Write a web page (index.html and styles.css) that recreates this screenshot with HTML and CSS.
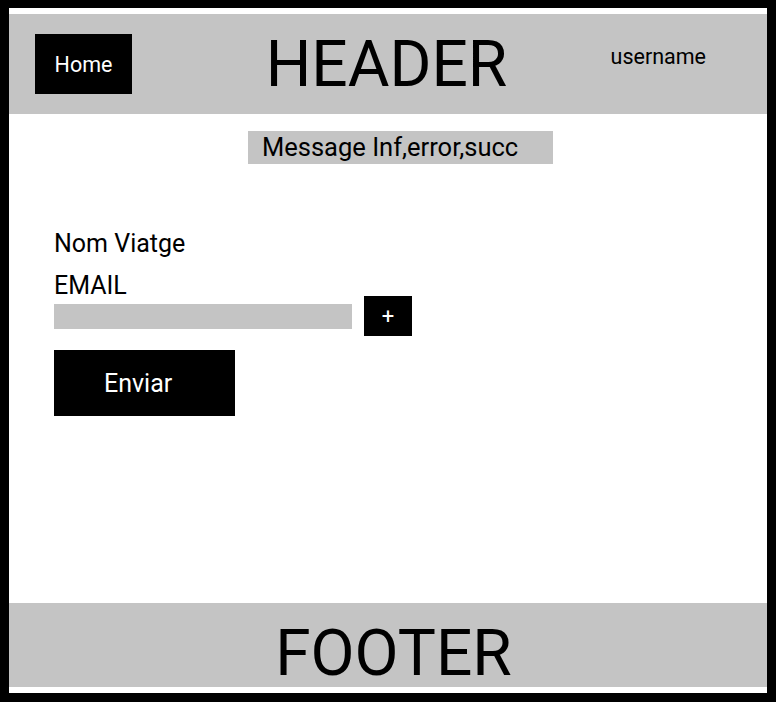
FILE: index.html
```html
<!DOCTYPE html>
<html>
<head>
	<title>Viatge</title>
	<link rel="stylesheet" href="styles.css">
</head>
<body>

	<div class="frame">
		<header class="top">
			<a class="home" href="#">Home</a>
			<h1>HEADER</h1>
			<span class="user">username</span>
		</header>

		<main class="main">
			<div class="message">Message Inf,error,succ</div>

			<form class="form">
				<label class="label">Nom Viatge</label>
				<label class="label label-email">EMAIL</label>
				<div class="row">
					<input type="text" class="input">
					<button type="button" class="add">+</button>
				</div>
				<button type="submit" class="send">Enviar</button>
			</form>
		</main>

		<footer class="bottom">FOOTER</footer>
	</div>

</body>
</html>
```

FILE: styles.css
```css
*{
	box-sizing: border-box;
}
body{
	margin: 0;
	font-family: Roboto, "Liberation Sans", sans-serif;
	color: #000;
}
.frame{
	display: flex;
	flex-direction: column;
	width: 776px;
	height: 702px;
	border: 9px solid #000;
	border-top-width: 8px;
	padding: 6px 0;
	background-color: #fff;
}
.top{
	display: grid;
	grid-template-columns: 1fr auto 1fr;
	align-items: center;
	height: 100px;
	padding: 0 26px 0 23px;
	background-color: #c4c4c4;
}
.home{
	justify-self: start;
	display: flex;
	align-items: center;
	justify-content: center;
	width: 97px;
	height: 60px;
	margin-left: 3px;
	background-color: #000;
	color: #fff;
	font-size: 21.5px;
	text-decoration: none;
}
.top h1{
	margin: 0;
	font-size: 64px;
	font-weight: 400;
	line-height: 75px;
}
.user{
	justify-self: end;
	align-self: start;
	margin: 30px 35px 0 0;
	font-size: 21.5px;
}
.main{
	flex: 1;
	padding-top: 17px;
}
.message{
	width: 305px;
	height: 33px;
	margin-left: 239px;
	padding-left: 14px;
	background-color: #c4c4c4;
	font-size: 25.5px;
	line-height: 33px;
}
.form{
	display: flex;
	flex-direction: column;
	align-items: flex-start;
	padding: 69px 0 0 45px;
}
.label{
	font-size: 25px;
	line-height: 22px;
}
.label-email{
	margin-top: 20px;
}
.row{
	display: flex;
	align-items: center;
	gap: 12px;
	margin-top: -1px;
}
.input{
	width: 298px;
	height: 25px;
	border: 0;
	padding: 0;
	background-color: #c4c4c4;
}
.add{
	width: 48px;
	height: 40px;
	border: 0;
	padding: 0;
	background-color: #000;
	color: #fff;
	font-family: inherit;
	font-size: 22px;
}
.send{
	width: 181px;
	height: 66px;
	margin-top: 14px;
	border: 0;
	padding: 0 0 0 50px;
	text-align: left;
	background-color: #000;
	color: #fff;
	font-family: inherit;
	font-size: 25px;
}
.bottom{
	height: 84px;
	padding: 13px 0 0 11px;
	background-color: #c4c4c4;
	font-size: 64px;
	line-height: 75px;
	text-align: center;
}
```
